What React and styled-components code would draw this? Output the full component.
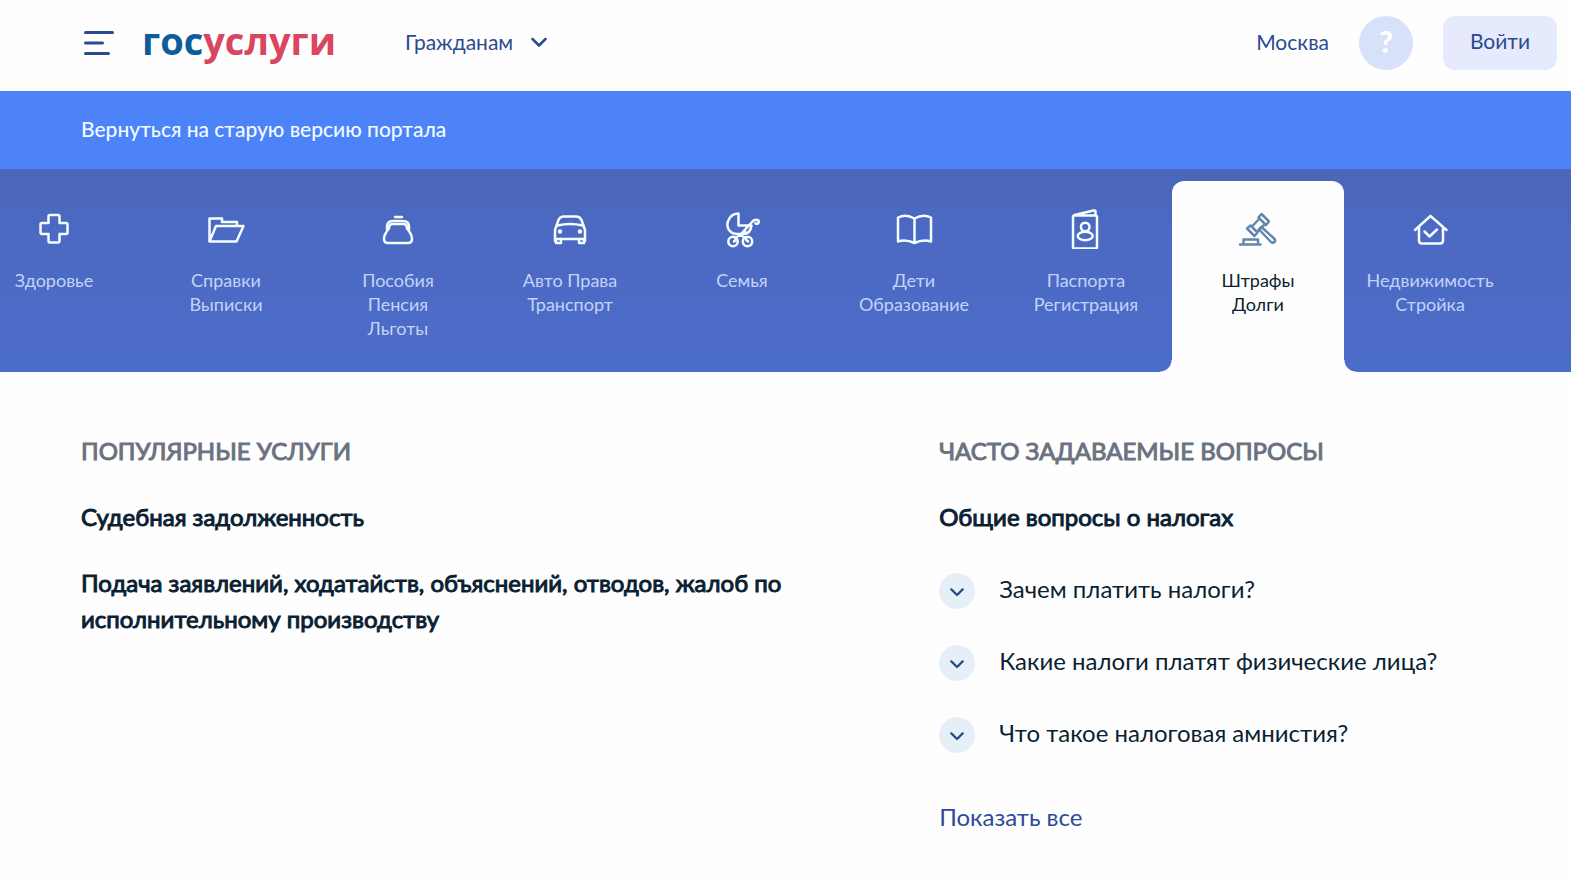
import React, { useState } from "react";
import styled, { createGlobalStyle, css } from "styled-components";

const GlobalStyle = createGlobalStyle`
  *, *::before, *::after { box-sizing: border-box; }
  body {
    margin: 0;
    background: #fefefe;
    color: #0b1f33;
    font-family: Lato, "Open Sans", sans-serif;
    font-size: 24px;
    line-height: 36px;
  }
  h1, h2, h3, ul { margin: 0; padding: 0; }
  ul { list-style: none; }
  button { font: inherit; border: 0; padding: 0; background: none; color: inherit; cursor: pointer; }
  a { color: inherit; text-decoration: none; }
`;

const Header = styled.header`
  display: flex;
  align-items: center;
  padding: 16px 14px 21px 84px;
  color: #2c4a8f;
  font-size: 21px;
  line-height: 24px;
`;

const MenuButton = styled.button`
  display: flex;
  margin-right: 28px;
`;

const Logo = styled.a`
  align-self: flex-start;
  margin-right: 69px;
  color: #d8475f;
  font-family: "Open Sans", "Noto Sans", sans-serif;
  font-size: 38px;
  font-weight: 700;
  line-height: 48px;
`;

const LogoStart = styled.span`
  color: #0d5d99;
`;

const AudienceButton = styled.button`
  display: flex;
  align-items: center;
  gap: 18px;
  padding-bottom: 3px;
`;

const HeaderActions = styled.div`
  display: flex;
  align-items: center;
  gap: 30px;
  margin-left: auto;
`;

const CityLink = styled.a`
  padding-bottom: 3px;
`;

const HelpButton = styled.button`
  width: 54px;
  height: 54px;
  padding-bottom: 4px;
  border-radius: 50%;
  background: #d7e2fa;
  color: #fff;
  font-size: 30px;
  font-weight: 900;
`;

const LoginButton = styled.button`
  width: 114px;
  height: 54px;
  padding-bottom: 4px;
  border-radius: 12px;
  background: #e5eafd;
`;

const Banner = styled.div`
  padding: 20px 81px 22px;
  background: #4c83f9;
  color: #f2fbff;
  font-size: 21px;
  font-weight: 500;
`;

const Categories = styled.nav`
  overflow: hidden;
  padding-top: 12px;
  background: linear-gradient(#4b67b9, #4c69c3 30%, #4c6dc8);
`;

const CategoryList = styled.ul`
  display: flex;
  margin-left: -32px;
`;

const CategoryItem = styled.li`
  display: flex;
  flex: 0 0 172px;
`;

const activeTab = css`
  background: #fefefe;
  color: #0b1f33;

  &::before,
  &::after {
    content: "";
    position: absolute;
    bottom: 0;
    width: 12px;
    height: 12px;
  }
  &::before {
    right: 100%;
    background: radial-gradient(circle at 0 0, transparent 11px, #fefefe 12px);
  }
  &::after {
    left: 100%;
    background: radial-gradient(circle at 100% 0, transparent 11px, #fefefe 12px);
  }
`;

const CategoryLink = styled.a`
  position: relative;
  display: flex;
  flex: 1;
  flex-direction: column;
  align-items: center;
  gap: 19px;
  padding: 28px 8px 32px;
  border-radius: 12px 12px 0 0;
  color: #c3d3f8;
  font-size: 18px;
  line-height: 24px;
  text-align: center;
  white-space: pre-line;
  ${(p) => p.$active && activeTab}
`;

const CategoryIcon = styled.svg`
  width: 40px;
  height: 40px;
  fill: none;
  stroke: ${(p) => (p.$active ? "#6387ae" : "#f4fdff")};
  stroke-linecap: round;
  stroke-linejoin: round;
`;

const Content = styled.main`
  display: grid;
  grid-template-columns: 3fr 2fr;
  gap: 32px;
  padding: 61px 81px 41px;
`;

const Column = styled.section`
  display: flex;
  flex-direction: column;
  align-items: flex-start;
  gap: 30px;
`;

const ColumnTitle = styled.h2`
  color: #6b7280;
  font-size: 24px;
  font-weight: 400;
  -webkit-text-stroke: 1px;
`;

const Topic = styled.h3`
  font-size: 24px;
  font-weight: 400;
  -webkit-text-stroke: 1px;
`;

const QuestionList = styled.ul`
  display: flex;
  flex-direction: column;
  gap: 36px;
  padding: 8px 0 16px;
`;

const Question = styled.button`
  display: flex;
  align-items: flex-start;
  gap: 24px;
  line-height: 32px;
  text-align: left;
`;

const Toggle = styled.span`
  display: grid;
  flex: none;
  place-items: center;
  width: 36px;
  height: 36px;
  padding-top: 2px;
  border-radius: 50%;
  background: #e6eff8;
  color: #244a86;
`;

const MoreLink = styled.a`
  color: #2c4a9a;
`;

const icons = {
  health: (
    <path d="M14 4h8q1.500 0 1.500 1.500V12h6.500q1.500 0 1.500 1.500v8q0 1.500-1.500 1.500h-6.500v7q0 1.500-1.500 1.500h-8q-1.500 0-1.500-1.500v-7H6q-1.500 0-1.500-1.500v-8Q4.500 12 6 12h6.500V5.500Q12.500 4 14 4Z" />
  ),
  folder: <path d="M1.500 30.500V7.500H14v3.500h15v4M1.500 30.500 8 15h27.500l-7 15.500Z" />,
  purse: (
    <>
      <path d="M15 6h7" />
      <path d="M7 18.500v-2.500q0-6 6-6h10q6 0 6 6v2.500" />
      <path d="M9 17.500c0-3.500 1.500-4.500 4-4.500h10c2.500 0 4 1 4 4.500 3 3.500 5 7 5 10.500q0 4-4 4H8q-4 0-4-4c0-3.500 2-7 5-10.500Z" />
    </>
  ),
  car: (
    <>
      <path d="M3 30V19l3.500-10Q8 5.500 12 5.500h12q4 0 5.500 3.500L33 19v11M3 28h30M5.500 14.500q12.500-3 25 0" />
      <path d="M4 28v4h5v-4M27 28v4h5v-4" />
      <circle cx="8" cy="20.500" r="1" />
      <circle cx="28" cy="20.500" r="1" />
    </>
  ),
  family: (
    <>
      <path d="M14.500 2.500A11 11 0 0 0 5 19Q8 23 13.500 23H19q7.500 0 8.500-8.500h-13Z" />
      <path d="M21.500 21 11 27M15 23l7 4.500M17 23 28.500 10.500q2.500-2.500 5-1.500t.5 3.500q-2 1-2.500-.5M10 30.500l2-2M24 30.500l-2-2" />
      <circle cx="9" cy="30.500" r="4.700" />
      <circle cx="23.500" cy="30.500" r="4.700" />
    </>
  ),
  book: (
    <path d="M18.500 7.500Q10 2.500 2 6.500v24q8-2.500 16.500 1.500 8.500-4 16.500-1.500v-24q-8-4-16.500 1ZV32" />
  ),
  passport: (
    <>
      <path d="M7 4.500h20.500q1.500 0 1.500 1.500v30q0 1.500-1.500 1.500h-21Q5 37.500 5 36V6q0-1.500 1.500-2L25.500-.5q2-.5 2 1v4" />
      <circle cx="17.200" cy="16" r="4.300" />
      <ellipse cx="17.200" cy="25" rx="7.500" ry="4.300" />
    </>
  ),
  gavel: (
    <>
      <path d="M0 33.500h20.500M3.500 33v-4.500H18V33" />
      <path d="m21.500 3 7.500 7.500-3 3.500-7.500-7.500ZM10.500 14.500l7 7-3 3.500-7.500-7.500ZM12 15.500l7.500-8M17 21l8-8" />
      <path d="m19 18.500 2.500-2.500L34 27.500q2 2 .5 3.500t-3.500 0Z" />
    </>
  ),
  home: (
    <>
      <path d="M3 19 18.500 5 34.500 19M7 16v13.500q0 3 3 3h18q3 0 3-3V16" />
      <path d="m12.500 20.500 5 5 7.500-7" />
    </>
  ),
};

const categories = [
  { icon: "health", label: "Здоровье" },
  { icon: "folder", label: "Справки\nВыписки" },
  { icon: "purse", label: "Пособия\nПенсия\nЛьготы" },
  { icon: "car", label: "Авто Права\nТранспорт" },
  { icon: "family", label: "Семья" },
  { icon: "book", label: "Дети\nОбразование" },
  { icon: "passport", label: "Паспорта\nРегистрация" },
  { icon: "gavel", label: "Штрафы\nДолги" },
  { icon: "home", label: "Недвижимость\nСтройка" },
];

const questions = [
  "Зачем платить налоги?",
  "Какие налоги платят физические лица?",
  "Что такое налоговая амнистия?",
];

function Chevron({ size = 16 }) {
  return (
    <svg width={size} height={size} viewBox="0 0 16 16" fill="none" stroke="currentColor" strokeWidth="2.500" strokeLinecap="round" strokeLinejoin="round" aria-hidden="true">
      <path d="m1.500 5 6.500 6.500L14.500 5" />
    </svg>
  );
}

export default function App() {
  const [active, setActive] = useState("gavel");

  return (
    <>
      <GlobalStyle />
      <Header>
        <MenuButton type="button" aria-label="Меню">
          <svg width="30" height="26" viewBox="0 0 30 26" stroke="currentColor" strokeWidth="3" strokeLinecap="round">
            <path d="M1.500 2.500h27M1.500 13h17M1.500 23.500h23" />
          </svg>
        </MenuButton>
        <Logo href="#">
          <LogoStart>гос</LogoStart>услуги
        </Logo>
        <AudienceButton type="button">
          Гражданам
          <Chevron />
        </AudienceButton>
        <HeaderActions>
          <CityLink href="#">Москва</CityLink>
          <HelpButton type="button">?</HelpButton>
          <LoginButton type="button">Войти</LoginButton>
        </HeaderActions>
      </Header>

      <Banner>
        <a href="#">Вернуться на старую версию портала</a>
      </Banner>

      <Categories>
        <CategoryList>
          {categories.map(({ icon, label }) => (
            <CategoryItem key={icon}>
              <CategoryLink href="#" $active={icon === active} onClick={() => setActive(icon)}>
                <CategoryIcon viewBox="-2 -2 40 40" strokeWidth="2.500" $active={icon === active} aria-hidden="true">
                  {icons[icon]}
                </CategoryIcon>
                {label}
              </CategoryLink>
            </CategoryItem>
          ))}
        </CategoryList>
      </Categories>

      <Content>
        <Column>
          <ColumnTitle>ПОПУЛЯРНЫЕ УСЛУГИ</ColumnTitle>
          <Topic>
            <a href="#">Судебная задолженность</a>
          </Topic>
          <Topic>
            <a href="#">Подача заявлений, ходатайств, объяснений, отводов, жалоб по исполнительному производству</a>
          </Topic>
        </Column>
        <Column>
          <ColumnTitle>ЧАСТО ЗАДАВАЕМЫЕ ВОПРОСЫ</ColumnTitle>
          <Topic>Общие вопросы о налогах</Topic>
          <QuestionList>
            {questions.map((text) => (
              <li key={text}>
                <Question type="button">
                  <Toggle>
                    <Chevron size={14} />
                  </Toggle>
                  {text}
                </Question>
              </li>
            ))}
          </QuestionList>
          <MoreLink href="#">Показать все</MoreLink>
        </Column>
      </Content>
    </>
  );
}
